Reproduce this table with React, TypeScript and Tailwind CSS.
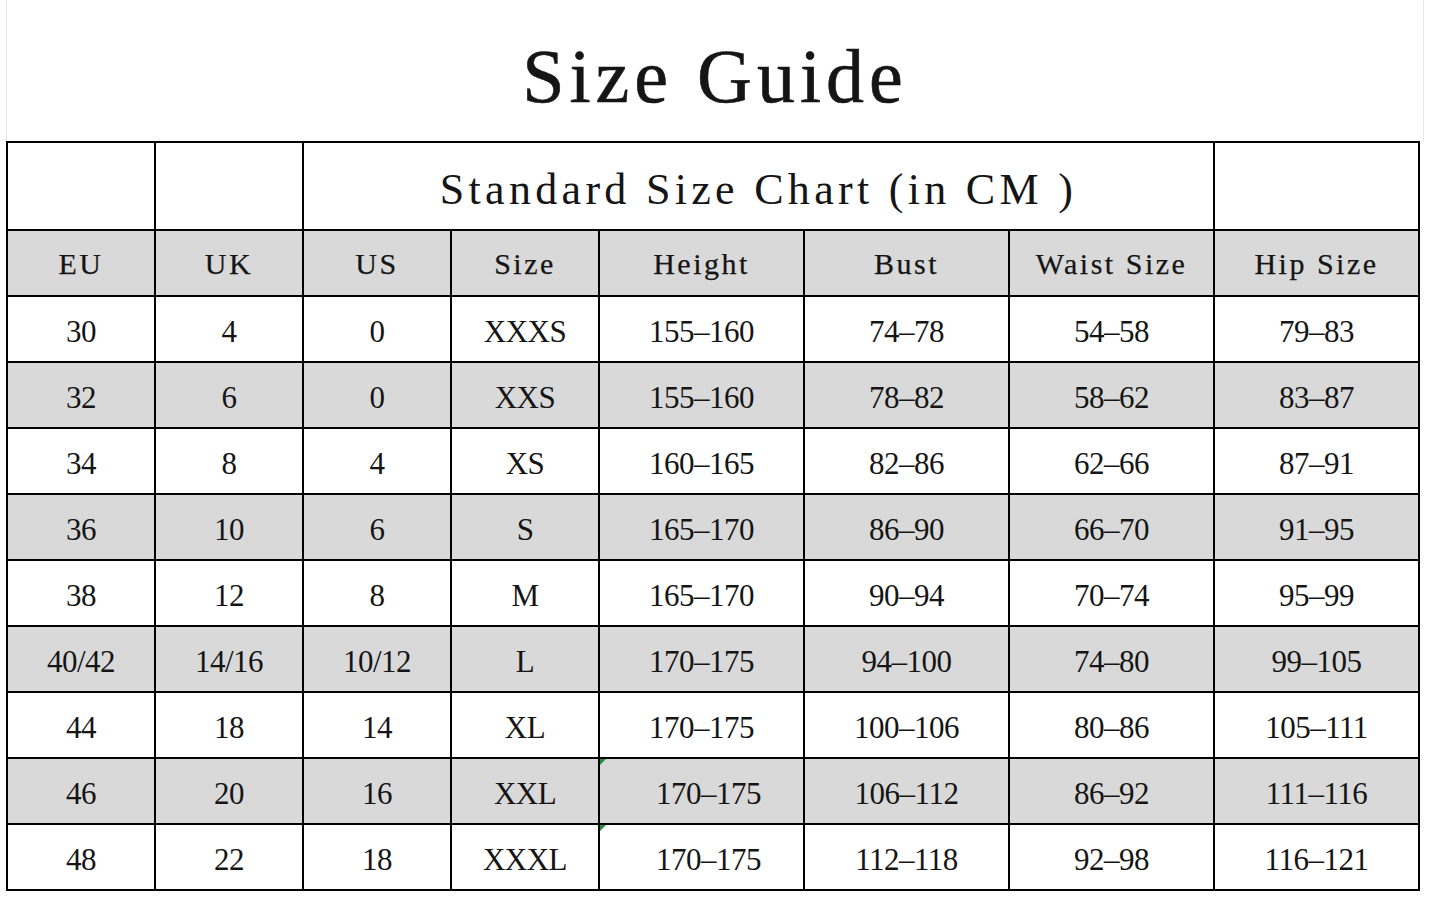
const headers = ["EU", "UK", "US", "Size", "Height", "Bust", "Waist Size", "Hip Size"];

const rows = [
  ["30", "4", "0", "XXXS", "155-160", "74-78", "54-58", "79-83"],
  ["32", "6", "0", "XXS", "155-160", "78-82", "58-62", "83-87"],
  ["34", "8", "4", "XS", "160-165", "82-86", "62-66", "87-91"],
  ["36", "10", "6", "S", "165-170", "86-90", "66-70", "91-95"],
  ["38", "12", "8", "M", "165-170", "90-94", "70-74", "95-99"],
  ["40/42", "14/16", "10/12", "L", "170-175", "94-100", "74-80", "99-105"],
  ["44", "18", "14", "XL", "170-175", "100-106", "80-86", "105-111"],
  ["46", "20", "16", "XXL", "170-175", "106-112", "86-92", "111-116"],
  ["48", "22", "18", "XXXL", "170-175", "112-118", "92-98", "116-121"],
];

const flagged = ["46", "48"];

function Cell({ children, gray, className = "" }: { children?: React.ReactNode; gray?: boolean; className?: string }) {
  return (
    <div
      className={`relative flex items-center justify-center border-r-2 border-b-2 border-black ${
        gray ? "bg-[#d9d9d9]" : "bg-white"
      } ${className}`}
    >
      {children}
    </div>
  );
}

export default function App() {
  return (
    <div className="min-h-[900px] w-[1430px] bg-white font-['Liberation_Serif',serif] text-[#151515]">
      <div className="mx-[6px] h-[141px] border-x border-[#e8e8e8] pt-[38px] text-center">
        <h1 className="text-[76px] leading-none tracking-[5px] [-webkit-text-stroke:0.6px_#151515]">Size Guide</h1>
      </div>

      <div className="ml-[6px] grid w-[1414px] grid-cols-[148px_148px_148px_148px_205px_205px_205px_205px] border-l-2 border-t-2 border-black">
        {/* top row: two blanks, merged title, one blank */}
        <Cell className="h-[88px]" />
        <Cell className="h-[88px]" />
        <Cell className="col-span-5 h-[88px] pt-[8px]">
          <span className="text-[44px] leading-none tracking-[4.3px]">Standard Size Chart (in CM )</span>
        </Cell>
        <Cell className="h-[88px]" />

        {headers.map((h) => (
          <Cell key={h} gray className="h-[66px] pt-[2px]">
            <span className="text-[30px] leading-none tracking-[2.5px] [-webkit-text-stroke:0.25px_#151515]">{h}</span>
          </Cell>
        ))}

        {rows.map((r, i) =>
          r.map((v, j) => {
            const flag = j === 4 && flagged.includes(r[0]);
            return (
              <Cell key={`${i}-${j}`} gray={i % 2 === 1} className={`h-[66px] pt-[4px] ${flag ? "pl-[14px]" : ""}`}>
                {flag && (
                  <span className="absolute left-0 top-0 h-0 w-0 border-t-[6px] border-r-[6px] border-t-[#1f8f3a] border-r-transparent" />
                )}
                <span className="text-[31px] leading-none tracking-[-0.5px]">{v.replace("-", "–")}</span>
              </Cell>
            );
          })
        )}
      </div>
    </div>
  );
}
